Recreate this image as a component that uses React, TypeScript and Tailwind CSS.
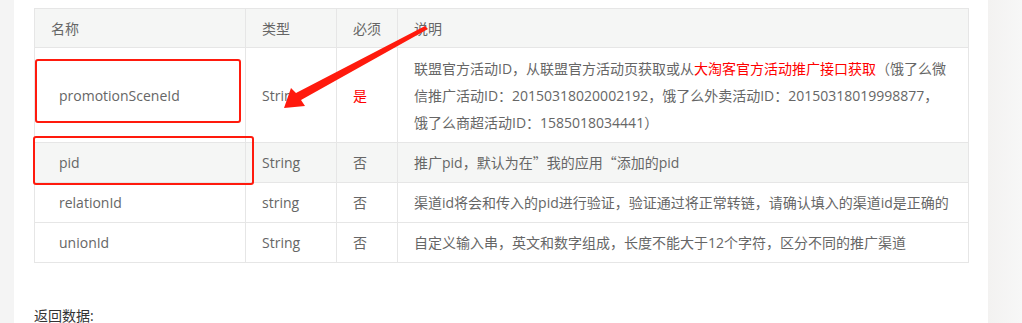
import React from 'react';

type Row = {
  name: string;
  type: string;
  required: string;
  desc: React.ReactNode;
  gray?: boolean;
  tall?: boolean;
};

const cjk = { fontFamily: '"Noto Sans CJK SC", sans-serif' };

const rows: Row[] = [
  {
    name: 'promotionSceneId',
    type: 'String',
    required: '是',
    desc: (
      <>
        联盟官方活动ID，从联盟官方活动页获取或从
        <span className="text-[#ff0000]">大淘客官方活动推广接口获取</span>
        （饿了么微信推广活动ID：20150318020002192，饿了么外卖活动ID：20150318019998877，饿了么商超活动ID：1585018034441）
      </>
    ),
    tall: true,
  },
  {
    name: 'pid',
    type: 'String',
    required: '否',
    desc: (
      <>
        推广pid，默认为在<span style={cjk}>”</span>我的应用<span style={cjk}>“</span>添加的pid
      </>
    ),
    gray: true,
  },
  {
    name: 'relationId',
    type: 'string',
    required: '否',
    desc: '渠道id将会和传入的pid进行验证，验证通过将正常转链，请确认填入的渠道id是正确的',
  },
  { name: 'unionId', type: 'String', required: '否', desc: '自定义输入串，英文和数字组成，长度不能大于12个字符，区分不同的推广渠道' },
];

const font = { fontFamily: '"Open Sans", "Noto Sans CJK SC", sans-serif' };

export default function App() {
  return (
    <div className="relative flex h-[323px] w-[1022px] overflow-hidden bg-white" style={font}>
      <div className="w-[14px] shrink-0 bg-[#f4f4f4]" />
      <div className="flex-1 bg-white pl-[20px] pt-[8px]">
        <table className="w-[934px] table-fixed border-collapse text-[14px] leading-[27px] text-[#666]">
          <colgroup>
            <col className="w-[211px]" />
            <col className="w-[91px]" />
            <col className="w-[61px]" />
            <col className="w-[571px]" />
          </colgroup>
          <thead>
            <tr className="h-[39px] bg-[#f5f6f5]">
              <th className="border border-[#e6e6e6] px-4 py-0 text-left font-normal">名称</th>
              <th className="border border-[#e6e6e6] px-4 py-0 text-left font-normal">类型</th>
              <th className="border border-[#e6e6e6] px-4 py-0 text-left font-normal">必须</th>
              <th className="border border-[#e6e6e6] px-4 py-0 text-left font-normal">说明</th>
            </tr>
          </thead>
          <tbody>
            {rows.map((r) => (
              <tr
                key={r.name}
                className={`${r.gray ? 'bg-[#f5f6f5]' : 'bg-white'} ${r.tall ? 'h-[95px]' : 'h-[40px]'}`}
              >
                <td className="border border-[#e6e6e6] px-[24px] py-0">{r.name}</td>
                <td className="border border-[#e6e6e6] px-4 py-0">{r.type}</td>
                <td className={`border border-[#e6e6e6] px-4 py-0 ${r.required === '是' ? 'text-[#ff0000]' : ''}`}>
                  {r.required}
                </td>
                <td className="border border-[#e6e6e6] px-4 py-0">{r.desc}</td>
              </tr>
            ))}
          </tbody>
        </table>
        <p className="mt-[43px] text-[14px] leading-[20px] text-[#333]">返回数据:</p>
      </div>
      <div className="w-[34px] shrink-0 bg-gradient-to-r from-[#f3f2f1] to-[#f7f7f7]" />

      {/* annotation boxes */}
      <div className="pointer-events-none absolute left-[35px] top-[59px] h-[64px] w-[206px] rounded-[3px] border-[2.5px] border-[#ff1a0d]" />
      <div className="pointer-events-none absolute left-[33px] top-[136px] h-[49px] w-[221px] rounded-[3px] border-[2.5px] border-[#ff1a0d]" />

      {/* annotation arrow */}
      <svg className="pointer-events-none absolute left-0 top-0" width="1022" height="323">
        <polygon
          points="284,108 291,88 296,93 425,26 428,29 301,100 305,106"
          fill="#ff1a0d"
        />
      </svg>
    </div>
  );
}
